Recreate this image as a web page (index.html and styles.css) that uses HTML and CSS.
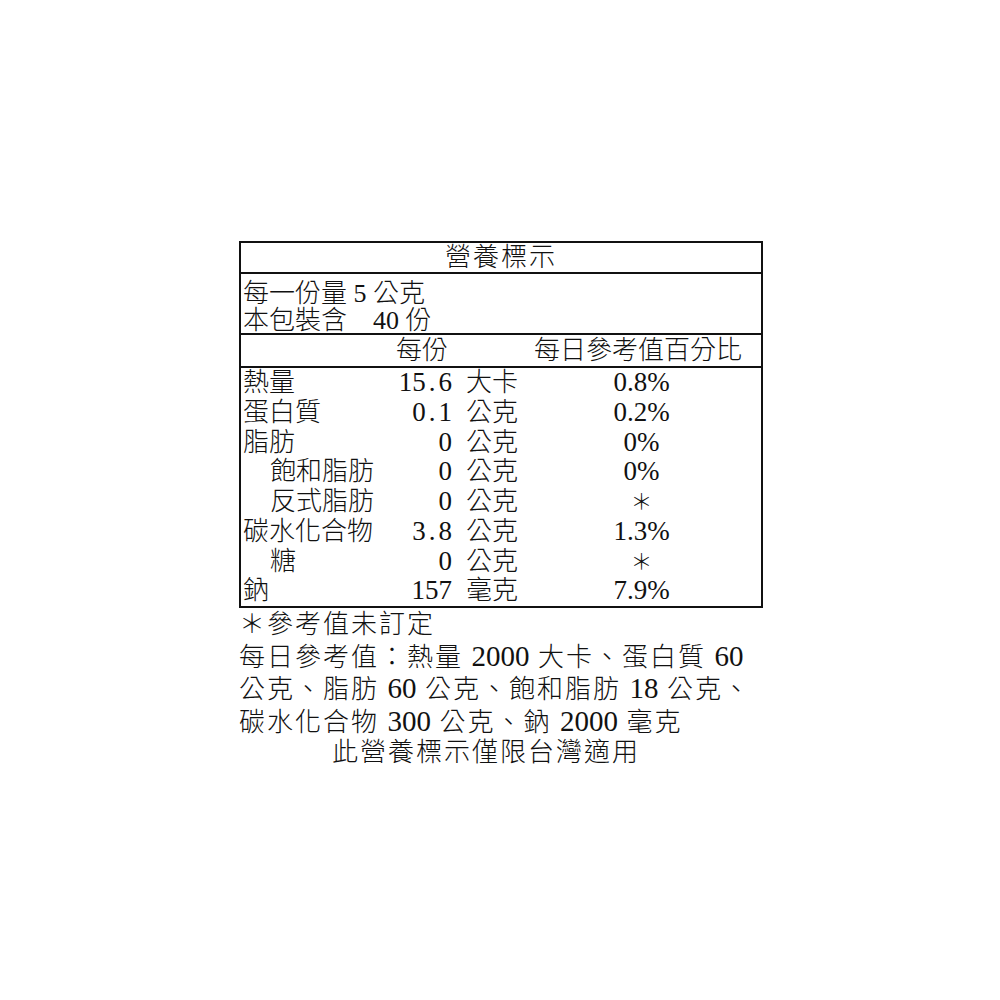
FILE: index.html
```html
<!DOCTYPE html>
<html lang="zh-Hant">
<head>
<meta charset="utf-8">
<title>營養標示</title>
<link rel="stylesheet" href="styles.css">
</head>
<body>
<div class="label">
  <div class="box">
    <div class="title">營養標示</div>
    <div class="serving">
      <div class="sline">每一份量 5 公克</div>
      <div class="sline">本包裝含&nbsp;&nbsp;&nbsp; 40 份</div>
    </div>
    <div class="grid head">
      <div></div>
      <div class="hamt">每份</div>
      <div></div>
      <div class="hpct">每日參考值百分比</div>
    </div>
    <div class="grid rows">
      <div class="name">熱量</div><div class="amt">15<span class="dot">.</span>6</div><div class="unit">大卡</div><div class="pct">0.8%</div>
      <div class="name">蛋白質</div><div class="amt">0<span class="dot">.</span>1</div><div class="unit">公克</div><div class="pct">0.2%</div>
      <div class="name">脂肪</div><div class="amt">0</div><div class="unit">公克</div><div class="pct">0%</div>
      <div class="name sub">飽和脂肪</div><div class="amt">0</div><div class="unit">公克</div><div class="pct">0%</div>
      <div class="name sub">反式脂肪</div><div class="amt">0</div><div class="unit">公克</div><div class="star">＊</div>
      <div class="name">碳水化合物</div><div class="amt">3<span class="dot">.</span>8</div><div class="unit">公克</div><div class="pct">1.3%</div>
      <div class="name sub">糖</div><div class="amt">0</div><div class="unit">公克</div><div class="star">＊</div>
      <div class="name">鈉</div><div class="amt">157</div><div class="unit">毫克</div><div class="pct">7.9%</div>
    </div>
  </div>
  <div class="notes">
    <div>＊參考值未訂定</div>
    <div>每日參考值：熱量 <span class="fn">2000</span> 大卡、蛋白質 <span class="fn">60</span></div>
    <div>公克、脂肪 <span class="fn">60</span> 公克、飽和脂肪 <span class="fn">18</span> 公克、</div>
    <div>碳水化合物 <span class="fn">300</span> 公克、鈉 <span class="fn">2000</span> 毫克</div>
    <div class="only">此營養標示僅限台灣適用</div>
  </div>
</div>
</body>
</html>
```
FILE: styles.css
```css
html, body {
  margin: 0;
  padding: 0;
  background: #ffffff;
}

body {
  font-family: "Liberation Serif", "Noto Sans CJK TC", serif;
  font-weight: 300;
  font-size: 26px;
  color: #111;
}

.label {
  width: 524px;
  margin: 241px 0 0 239px;
}

.box {
  border: 2px solid #111;
}

.title {
  height: 29px;
  line-height: 29px;
  text-align: center;
  letter-spacing: 2px;
  border-bottom: 2px solid #111;
}

.serving {
  height: 53px;
  padding: 6px 0 0 2px;
  border-bottom: 2px solid #111;
}

.sline {
  height: 27px;
  line-height: 27px;
}

.grid {
  display: grid;
  grid-template-columns: 120px 89px 70px 1fr;
  padding-left: 2px;
}

.head {
  height: 31px;
  line-height: 31px;
  border-bottom: 2px solid #111;
}

.rows {
  grid-auto-rows: 29.75px;
  line-height: 29.75px;
}

.name {
  white-space: nowrap;
}

.sub {
  padding-left: 27px;
}

.hamt {
  text-align: right;
  padding-right: 4px;
  white-space: nowrap;
}

.hpct {
  text-align: center;
  padding-right: 7px;
  white-space: nowrap;
}

.amt {
  text-align: right;
  white-space: nowrap;
  font-size: 27px;
}

.dot {
  margin: 0 3px;
}

.unit {
  padding-left: 14px;
  white-space: nowrap;
}

.pct {
  text-align: center;
  white-space: nowrap;
  font-size: 27px;
}

.star {
  text-align: center;
  font-size: 22px;
}

.notes {
  padding-top: 2px;
  line-height: 30.5px;
  letter-spacing: 2px;
  white-space: nowrap;
}

.fn {
  font-size: 29px;
  letter-spacing: 0;
}

.only {
  padding-left: 93px;
}
```
